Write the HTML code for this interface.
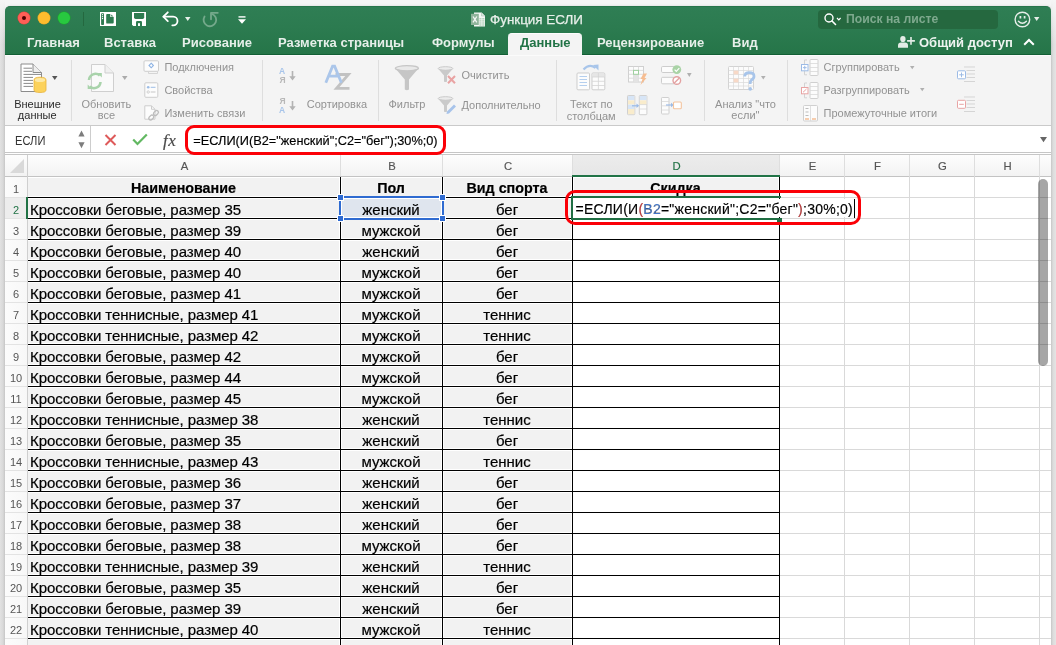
<!DOCTYPE html><html><head><meta charset="utf-8"><style>
*{margin:0;padding:0;box-sizing:border-box}
html,body{width:1056px;height:645px;overflow:hidden;background:#f5f5f5;font-family:"Liberation Sans",sans-serif;position:relative}
.a{position:absolute}
.t{position:absolute;white-space:nowrap;line-height:1}
.tab{position:absolute;font-weight:bold;font-size:13px;color:#e6efe9;line-height:1;white-space:nowrap}
.rl{position:absolute;font-size:11px;color:#2a2a2a;line-height:1;white-space:nowrap}
.rd{color:#929292}
.c{position:absolute;white-space:nowrap;line-height:1;font-size:15px;color:#000;letter-spacing:-.07px;-webkit-text-stroke:.2px #000}
.cb{letter-spacing:0}
.rn{position:absolute;white-space:nowrap;line-height:1;font-size:11px;color:#555;text-align:center;width:22px}
.ch{position:absolute;white-space:nowrap;line-height:1;font-size:11.3px;color:#555;text-align:center;-webkit-text-stroke:.15px #555}
svg{position:absolute;overflow:visible}
</style></head><body><div id="root" style="position:absolute;left:0;top:0;width:1056px;height:645px;overflow:hidden;will-change:transform">
<div class="a" style="left:4.5px;top:5.5px;width:1047px;height:660px;background:#d0d0d0;border-radius:5.5px 5.5px 0 0;box-shadow:0 0 3px rgba(0,0,0,.12)"></div>
<div class="a" style="left:5px;top:30px;width:1046px;height:630px;background:#fff"></div>
<div class="a" style="left:5px;top:6px;width:1046px;height:49px;background:linear-gradient(#2f7e54 0px,#2c7b50 20px,#257548 48px);border-radius:5px 5px 0 0;border-top:1px solid #26744a"></div>
<div class="a" style="left:5px;top:54px;width:1046px;height:1px;background:#135f35"></div>
<div class="a" style="left:18px;top:12px;width:12px;height:12px;border-radius:50%;background:#fe5f57;box-shadow:0 0 0 .5px #e0443e"></div>
<div class="a" style="left:38px;top:12px;width:12px;height:12px;border-radius:50%;background:#febc2e;box-shadow:0 0 0 .5px #dea123"></div>
<div class="a" style="left:58px;top:12px;width:12px;height:12px;border-radius:50%;background:#28c840;box-shadow:0 0 0 .5px #1aab29"></div>
<div class="a" style="left:22px;top:16px;width:4px;height:4px;border-radius:50%;background:#4d0000"></div>
<div class="a" style="left:83px;top:12px;width:1px;height:14px;background:#24683f"></div>
<svg style="left:100px;top:12px" width="16" height="14" viewBox="0 0 16 14"><rect x="0" y="0" width="16" height="14" fill="#fff"/><rect x="1.1" y="1.2" width="2.9" height="11.8" rx=".8" fill="#2d7b50"/><circle cx="2.55" cy="2.7" r=".65" fill="#fff"/><circle cx="2.55" cy="4.6" r=".65" fill="#fff"/><circle cx="2.55" cy="6.5" r=".65" fill="#fff"/><path d="M6.2 2.9 Q6.2 2 7.1 2 H10.3 V5 H13.7 V10.6 Q13.7 11.6 12.8 11.6 H7.1 Q6.2 11.6 6.2 10.7 Z" fill="#2d7b50"/><path d="M11.2 2.4 L13.5 4.6 H11.2 Z" fill="#2d7b50"/></svg>
<svg style="left:132px;top:12px" width="14" height="14" viewBox="0 0 14 14"><path d="M0 0 H14 V14 H1.2 L0 12.8 Z" fill="#fff"/><path d="M2 1.1 H12.2 V5.3 Q12.2 6.9 10.6 6.9 H3.6 Q2 6.9 2 5.3 Z" fill="#2d7b50"/><path d="M4 14 V10.2 Q4 9 5.2 9 H8.8 Q10 9 10 10.2 V14 Z" fill="#2d7b50"/><rect x="6" y="11.2" width="2" height="2.8" fill="#fff"/></svg>
<svg style="left:162px;top:11px" width="18" height="16" viewBox="0 0 18 16"><path d="M1.5 5.7 H11.2 A4.3 4.3 0 0 1 11.2 14.3 H10.3" fill="none" stroke="#fff" stroke-width="1.8" stroke-linecap="round"/><path d="M5.8 1.3 L1.4 5.7 L5.8 10.1" fill="none" stroke="#fff" stroke-width="1.8" stroke-linecap="round" stroke-linejoin="round"/></svg>
<svg style="left:185px;top:17px" width="6" height="4" viewBox="0 0 6 4"><path d="M0 0 H5.5 L2.75 4 Z" fill="#e8f0ea"/></svg>
<svg style="left:202px;top:11px" width="17" height="17" viewBox="0 0 17 17"><path d="M2.56 5.56 A6.3 6.3 0 1 0 10.05 2.98" fill="none" stroke="#74a98b" stroke-width="1.8" stroke-linecap="round"/><path d="M15.8 1.8 H9 V8.3" fill="none" stroke="#74a98b" stroke-width="1.8" stroke-linecap="round" stroke-linejoin="round"/></svg>
<svg style="left:238px;top:16px" width="8" height="8" viewBox="0 0 8 8"><rect x="0.5" y="0.2" width="7" height="1.4" fill="#fff"/><path d="M0 3.3 H8 L4 7.8 Z" fill="#fff"/></svg>
<svg style="left:471px;top:11.5px" width="15" height="15" viewBox="0 0 15 15"><path d="M3 0.5 H10.5 L14 4 V14.5 H3 Z" fill="#f4f7f5"/><path d="M10.5 0.5 V4 H14" fill="#e0e8e3" stroke="#9bb8a6" stroke-width=".5"/><g fill="#a9cdb3"><rect x="8.3" y="6.2" width="2.2" height="1.2"/><rect x="11.2" y="6.2" width="2.2" height="1.2"/><rect x="8.3" y="8.3" width="2.2" height="1.2"/><rect x="11.2" y="8.3" width="2.2" height="1.2"/><rect x="8.3" y="10.4" width="2.2" height="1.2"/><rect x="11.2" y="10.4" width="2.2" height="1.2"/><rect x="8.3" y="12.4" width="2.2" height="1.2"/><rect x="11.2" y="12.4" width="2.2" height="1.2"/></g><rect x="0" y="1.8" width="7.8" height="11.2" fill="#8fb49b"/><path d="M2 4.5 L5.8 10.3 M5.8 4.5 L2 10.3" stroke="#f4f7f5" stroke-width="1.3"/></svg>
<div class="t" style="left:490px;top:13px;font-size:13.4px;color:#e8f0ea;-webkit-text-stroke:.25px #e8f0ea">Функция ЕСЛИ</div>
<div class="a" style="left:818px;top:10px;width:180px;height:19px;background:#25683f;border-radius:4px"></div>
<svg style="left:824px;top:13px" width="18" height="13" viewBox="0 0 18 13"><circle cx="5" cy="5" r="4" fill="none" stroke="#fff" stroke-width="1.4"/><path d="M8 8 L11.5 11.5" stroke="#fff" stroke-width="1.6" stroke-linecap="round"/><path d="M13 5 L14.8 6.8 L16.6 5" fill="none" stroke="#fff" stroke-width="1.2"/></svg>
<div class="t" style="left:846px;top:13px;font-size:12.2px;font-weight:bold;color:#7ea98e">Поиск на листе</div>
<svg style="left:1013.5px;top:10.5px" width="17" height="17" viewBox="0 0 17 17"><circle cx="8.4" cy="8.5" r="7.3" fill="none" stroke="#e6eee9" stroke-width="1.4"/><path d="M6.4 5 V7.6 M10.6 5 V7.6" stroke="#e6eee9" stroke-width="1.7"/><path d="M4.4 10.3 Q8.4 14.2 12.4 10.3" fill="none" stroke="#e6eee9" stroke-width="1.4" stroke-linecap="round"/></svg>
<svg style="left:1034px;top:17px" width="6" height="5" viewBox="0 0 6 5"><path d="M0 0 H5.4 L2.7 4 Z" fill="#e6eee9"/></svg>
<div class="tab" style="left:27px;top:36px">Главная</div>
<div class="tab" style="left:104px;top:36px">Вставка</div>
<div class="tab" style="left:182px;top:36px">Рисование</div>
<div class="tab" style="left:278px;top:36px">Разметка страницы</div>
<div class="tab" style="left:432px;top:36px">Формулы</div>
<div class="tab" style="left:597px;top:36px">Рецензирование</div>
<div class="tab" style="left:732px;top:36px">Вид</div>
<div class="a" style="left:508px;top:33px;width:74px;height:23px;background:#f4f4f4;border-radius:4px 4px 0 0;border-top:1px solid #fdfdfd"></div>
<div class="tab" style="left:520px;top:36px;color:#217346">Данные</div>
<svg style="left:898px;top:35px" width="18" height="14" viewBox="0 0 18 14"><ellipse cx="4.9" cy="4" rx="2.7" ry="3.1" fill="#e3ece6"/><path d="M0 12.8 V10.5 Q0 7.6 3 7.6 H7 Q10 7.6 10 10.5 V12.8 Z" fill="#e3ece6"/><path d="M13 2 V9.8 M9.1 5.9 H16.9" stroke="#e3ece6" stroke-width="1.6"/></svg>
<div class="tab" style="left:919px;top:36px;color:#eef4f0;font-size:13px">Общий доступ</div>
<svg style="left:1023px;top:38px" width="12" height="8" viewBox="0 0 12 8"><path d="M1.2 6.8 L6 2 L10.8 6.8" fill="none" stroke="#fff" stroke-width="2"/></svg>
<div class="a" style="left:5px;top:55px;width:1046px;height:1px;background:#fbfbfb"></div>
<div class="a" style="left:5px;top:56px;width:1046px;height:69px;background:#f4f4f4"></div>
<div class="a" style="left:5px;top:125px;width:1046px;height:1px;background:#cacaca"></div>
<div class="a" style="left:71px;top:60px;width:1px;height:61px;background:#dedede"></div>
<div class="a" style="left:262px;top:60px;width:1px;height:61px;background:#dedede"></div>
<div class="a" style="left:378px;top:60px;width:1px;height:61px;background:#dedede"></div>
<div class="a" style="left:556px;top:60px;width:1px;height:61px;background:#dedede"></div>
<div class="a" style="left:704px;top:60px;width:1px;height:61px;background:#dedede"></div>
<div class="a" style="left:787px;top:60px;width:1px;height:61px;background:#dedede"></div>
<svg style="left:20px;top:63px" width="27" height="30" viewBox="0 0 27 30"><path d="M1 1 H13 L21.5 9.5 V28.5 H1 Z" fill="#fff" stroke="#8c8c8c" stroke-width="1" stroke-linejoin="round"/><path d="M13 1 V9.5 H21.5" fill="#eee" stroke="#8c8c8c" stroke-width="1"/><g stroke="#8a8a8a" stroke-width="1"><path d="M3.5 5.2 H12 M3.5 8.3 H12 M3.5 11.4 H21 M3.5 14.4 H13 M3.5 17.4 H13 M3.5 20.4 H13 M3.5 23.4 H13"/></g><path d="M14 17 Q14 14.2 20 14.2 Q26 14.2 26 17 V27 Q26 29.5 20 29.5 Q14 29.5 14 27 Z" fill="#fcd25b" stroke="#e8b43c" stroke-width=".8"/><ellipse cx="20" cy="17" rx="5.2" ry="2" fill="#fde9a6"/></svg>
<svg style="left:52px;top:76px" width="6" height="4" viewBox="0 0 6 4"><path d="M0 0 H5.5 L2.75 4 Z" fill="#555"/></svg>
<div class="rl" style="left:-22.5px;top:98.5px;width:120px;text-align:center">Внешние</div>
<div class="rl" style="left:-22.799999999999997px;top:110.4px;width:120px;text-align:center">данные</div>
<svg style="left:86px;top:63px" width="29" height="30" viewBox="0 0 29 30"><path d="M5.5 1.5 H19 L27.5 10 V28.5 H5.5 Z" fill="#fafafa" stroke="#cfcfcf" stroke-width="1"/><path d="M19 1.5 V10 H27.5" fill="#f0f0f0" stroke="#cfcfcf" stroke-width="1"/><path d="M3 17 A6.5 6.5 0 0 1 13.8 12.5" fill="none" stroke="#a9d3ab" stroke-width="2.6"/><path d="M11.5 10 L15.8 10 L15.8 14.5 Z" fill="#a9d3ab"/><path d="M14.5 19 A6.5 6.5 0 0 1 3.7 23.5" fill="none" stroke="#a9d3ab" stroke-width="2.6"/><path d="M6 26 L1.7 26 L1.7 21.5 Z" fill="#a9d3ab"/></svg>
<svg style="left:122px;top:76px" width="6" height="4" viewBox="0 0 6 4"><path d="M0 0 H5.5 L2.75 4 Z" fill="#ababab"/></svg>
<div class="rl rd" style="left:46.400000000000006px;top:99.0px;width:120px;text-align:center">Обновить</div>
<div class="rl rd" style="left:46.400000000000006px;top:110.4px;width:120px;text-align:center">все</div>
<svg style="left:143px;top:60px" width="17" height="15" viewBox="0 0 17 15"><rect x="1" y="0.8" width="14.5" height="10.5" rx="1" fill="#fcfcfc" stroke="#cdcdcd"/><path d="M5.5 11.3 V13.5 H14.5 V11.3" fill="none" stroke="#d5d5d5"/><path d="M8.2 3.2 L10.4 5.5 L8.2 7.8 L6 5.5 Z" fill="none" stroke="#8fb4e4" stroke-width="1.1"/></svg>
<svg style="left:144px;top:82px" width="15" height="16" viewBox="0 0 15 16"><rect x="0.8" y="0.8" width="13" height="14.5" rx="1" fill="#fcfcfc" stroke="#cdcdcd"/><circle cx="4.2" cy="5.3" r="1.3" fill="#9dbde6"/><path d="M6.7 5.3 H11.5" stroke="#9dbde6" stroke-width="1"/><circle cx="4.2" cy="10" r="1.2" fill="none" stroke="#c6c6c6" stroke-width=".8"/><path d="M6.7 10 H11.5" stroke="#c6c6c6" stroke-width="1"/></svg>
<svg style="left:144px;top:105px" width="17" height="17" viewBox="0 0 17 17"><path d="M0.8 0.8 H7.5 L11 4.3 V14.2 H0.8 Z" fill="#fcfcfc" stroke="#cdcdcd"/><path d="M7.5 0.8 V4.3 H11" fill="none" stroke="#cdcdcd"/><g fill="none" stroke="#bdbdbd" stroke-width="1.3"><rect x="4.5" y="10.8" width="5.5" height="3.6" rx="1.8" transform="rotate(-45 7.25 12.6)"/><rect x="9.2" y="6.2" width="5.5" height="3.6" rx="1.8" transform="rotate(-45 11.95 8)"/></g></svg>
<div class="rl rd" style="left:164.4px;top:62.0px">Подключения</div>
<div class="rl rd" style="left:164.4px;top:84.8px">Свойства</div>
<div class="rl rd" style="left:164.4px;top:107.5px">Изменить связи</div>
<div class="t" style="left:279px;top:66.5px;font-size:8.5px;color:#a8c5ea;font-weight:bold">А</div>
<div class="t" style="left:279.5px;top:75.5px;font-size:8.5px;color:#b8b8b8;font-weight:bold">Я</div>
<div class="t" style="left:279.5px;top:96.5px;font-size:8.5px;color:#b8b8b8;font-weight:bold">Я</div>
<div class="t" style="left:279px;top:105.5px;font-size:8.5px;color:#a8c5ea;font-weight:bold">А</div>
<svg style="left:288.5px;top:71px" width="7" height="10" viewBox="0 0 7 10"><path d="M3.5 0 V8" stroke="#b3b3b3" stroke-width="1.6"/><path d="M0.3 5.2 L3.5 9.4 L6.7 5.2 Z" fill="#b3b3b3"/></svg>
<svg style="left:288.5px;top:100.5px" width="7" height="10" viewBox="0 0 7 10"><path d="M3.5 0 V8" stroke="#b3b3b3" stroke-width="1.6"/><path d="M0.3 5.2 L3.5 9.4 L6.7 5.2 Z" fill="#b3b3b3"/></svg>
<svg style="left:324px;top:65px" width="27" height="26" viewBox="0 0 27 26"><path d="M11.5 9.5 H24.5 L12.5 23.3 H25.5" fill="none" stroke="#c2c2c2" stroke-width="2.8"/><path d="M1.8 17.8 L8.6 1.2 H10.6 L17.4 17.8 M4.8 11.2 H14.4" fill="none" stroke="#abc6ea" stroke-width="2.8"/></svg>
<div class="rl rd" style="left:306.7px;top:98.6px">Сортировка</div>
<svg style="left:394px;top:65px" width="26" height="27" viewBox="0 0 26 27"><ellipse cx="12.9" cy="3.3" rx="11.6" ry="2.6" fill="#e9e9e9" stroke="#c6c6c6" stroke-width="1.2"/><path d="M1.4 3.6 L10.8 14.5 V24.5 Q12.9 26 15 24.5 V14.5 L24.4 3.6 Q12.9 8 1.4 3.6 Z" fill="#c6c6c6"/></svg>
<div class="rl rd" style="left:388.5px;top:99.0px">Фильтр</div>
<svg style="left:437px;top:66px" width="20" height="19" viewBox="0 0 20 19"><ellipse cx="8.5" cy="2.5" rx="7.3" ry="1.8" fill="#ececec" stroke="#cacaca" stroke-width="1"/><path d="M1.2 2.7 L7 9.5 V15.5 Q8.5 16.5 10 15.5 V9.5 L15.8 2.7 Q8.5 5.5 1.2 2.7 Z" fill="#cacaca"/><path d="M11 10 L18 17.3 M18 10 L11 17.3" stroke="#e9a3a3" stroke-width="2"/></svg>
<div class="rl rd" style="left:461.5px;top:70.0px">Очистить</div>
<svg style="left:437px;top:96px" width="20" height="19" viewBox="0 0 20 19"><ellipse cx="8.5" cy="2.5" rx="7.3" ry="1.8" fill="#ececec" stroke="#cacaca" stroke-width="1"/><path d="M1.2 2.7 L7 9.5 V15.5 Q8.5 16.5 10 15.5 V9.5 L15.8 2.7 Q8.5 5.5 1.2 2.7 Z" fill="#cacaca"/><path d="M17 8.5 L19 10.5 L12 17.5 L9.5 18 L10 15.5 Z" fill="#a7c3ea"/></svg>
<div class="rl rd" style="left:461.5px;top:99.8px">Дополнительно</div>
<svg style="left:576px;top:64px" width="30" height="27" viewBox="0 0 30 27"><path d="M7.5 5.5 Q13.5 -1 19.5 4" fill="none" stroke="#a8c5ea" stroke-width="2.2"/><path d="M17 1 L22.5 6.5 L22.5 0.5 Z" fill="#a8c5ea"/><rect x="1" y="9" width="12.5" height="16.8" rx="1" fill="#fcfcfc" stroke="#cdcdcd"/><g stroke="#b5cfee" stroke-width="1"><path d="M3.5 12.5 H11 M3.5 15.5 H11 M3.5 18.5 H11 M3.5 21.5 H11"/></g><rect x="16" y="9" width="12.8" height="16.8" rx="1" fill="#fcfcfc" stroke="#cdcdcd"/><rect x="16.5" y="9.5" width="11.8" height="3.5" fill="#e6e6e6"/><path d="M22.4 9 V25.8 M16 13 H28.8 M16 17.3 H28.8 M16 21.5 H28.8" stroke="#d4d4d4" stroke-width=".8"/></svg>
<div class="rl rd" style="left:531.3px;top:98.7px;width:120px;text-align:center">Текст по</div>
<div class="rl rd" style="left:531.2px;top:110.5px;width:120px;text-align:center">столбцам</div>
<svg style="left:628px;top:66px" width="20" height="20" viewBox="0 0 20 20"><rect x="0.5" y="0.5" width="15" height="15.5" fill="#fcfcfc" stroke="#d0d0d0"/><path d="M5.5 0.5 V16 M10.5 0.5 V16 M0.5 4.4 H15.5 M0.5 8.3 H15.5 M0.5 12.2 H15.5" stroke="#d5d5d5" stroke-width=".8"/><rect x="5.5" y="8.3" width="5" height="7.7" fill="#e3e3e3"/><rect x="5.5" y="4.4" width="5" height="3.9" fill="#fff" stroke="#9fd09f" stroke-width="1"/><path d="M15.5 7.5 H19 L16.5 12 H18.5 L12.5 19 L14.5 13 H12.5 Z" fill="#f6bd92"/></svg>
<svg style="left:661px;top:65px" width="22" height="21" viewBox="0 0 22 21"><rect x="0.5" y="1.5" width="13" height="6" rx="1.2" fill="#fcfcfc" stroke="#cdcdcd"/><rect x="0.5" y="12.3" width="13" height="6.5" rx="1.2" fill="#fcfcfc" stroke="#cdcdcd"/><circle cx="15.8" cy="4.6" r="4.4" fill="#a9d3a6"/><path d="M13.6 4.6 L15.3 6.3 L18.3 3.1" fill="none" stroke="#fff" stroke-width="1.2"/><circle cx="15.8" cy="15.5" r="3.8" fill="#fff" stroke="#e3a2a2" stroke-width="1.4"/><path d="M13.3 18 L18.3 13" stroke="#e3a2a2" stroke-width="1.4"/></svg>
<svg style="left:687px;top:73px" width="5" height="4" viewBox="0 0 5 4"><path d="M0 0 H4.6 L2.3 4 Z" fill="#b0b0b0"/></svg>
<svg style="left:627px;top:95px" width="21" height="21" viewBox="0 0 21 21"><rect x="0.5" y="0.5" width="7.3" height="19.2" rx=".8" fill="#fcfcfc" stroke="#d0d0d0"/><rect x="1" y="1" width="6.3" height="4.3" fill="#d7e5f6"/><rect x="1" y="5.3" width="6.3" height="4.3" fill="#f9eccc"/><rect x="1" y="9.6" width="6.3" height="4.4" fill="#d7e5f6"/><rect x="1" y="14" width="6.3" height="5.2" fill="#f9eccc"/><rect x="12.3" y="0.5" width="7.6" height="19.2" rx=".8" fill="#fcfcfc" stroke="#d0d0d0"/><rect x="12.8" y="1" width="6.6" height="4.3" fill="#d7e5f6"/><rect x="12.8" y="5.3" width="6.6" height="4.3" fill="#f9eccc"/><path d="M12.3 9.6 H19.9 M12.3 14 H19.9" stroke="#d5d5d5" stroke-width=".8"/><path d="M5 10.8 H11" stroke="#9cbbe6" stroke-width="1.2"/><path d="M9.5 8.6 L12.2 10.8 L9.5 13" fill="#9cbbe6"/></svg>
<svg style="left:661px;top:97px" width="21" height="18" viewBox="0 0 21 18"><rect x="0.5" y="0.5" width="7.5" height="16.5" rx=".8" fill="#fcfcfc" stroke="#d0d0d0"/><path d="M0.5 4.5 H8 M0.5 8.8 H8 M0.5 13 H8" stroke="#d8d8d8" stroke-width=".8"/><path d="M5 8 H11" stroke="#9cbbe6" stroke-width="1.2"/><path d="M10 5.8 L12.8 8 L10 10.2 Z" fill="#9cbbe6"/><rect x="12.5" y="5" width="7.8" height="6.8" rx="1" fill="#fff" stroke="#f3c49e" stroke-width="1.1"/></svg>
<svg style="left:728px;top:66px" width="28" height="26" viewBox="0 0 28 26"><rect x="0.5" y="0.5" width="25" height="23" rx="1" fill="#fcfcfc" stroke="#d3d3d3"/><path d="M5.5 0.5 V23.5 M10.5 0.5 V23.5 M15.5 0.5 V23.5 M20.5 0.5 V23.5 M0.5 4.5 H25.5 M0.5 8.5 H25.5 M0.5 12.5 H25.5 M0.5 16.5 H25.5 M0.5 20 H25.5" stroke="#dadada" stroke-width=".7"/><rect x="5.6" y="4.6" width="4.8" height="3.8" fill="#f8d9c7"/><rect x="5.6" y="12.6" width="4.8" height="3.8" fill="#f8d9c7"/><path d="M16.7 10.5 Q16.7 6.6 21.5 6.6 Q26 6.6 26 10.3 Q26 12.6 23.5 14 Q22.2 14.8 22.2 17 V18" fill="none" stroke="#a8c5ea" stroke-width="2.8"/><circle cx="22.2" cy="22.9" r="1.8" fill="#a8c5ea"/></svg>
<svg style="left:760.5px;top:76px" width="5" height="4" viewBox="0 0 5 4"><path d="M0 0 H4.6 L2.3 3.4 Z" fill="#b0b0b0"/></svg>
<div class="rl rd" style="left:685.5px;top:98.7px;width:120px;text-align:center">Анализ "что</div>
<div class="rl rd" style="left:685.4px;top:110.1px;width:120px;text-align:center">если"</div>
<svg style="left:800px;top:59px" width="19" height="17" viewBox="0 0 19 17"><path d="M7 1 H4.5 V15.8 H7" fill="none" stroke="#d3d3d3"/><rect x="10" y="0.5" width="8" height="16" rx=".8" fill="#fcfcfc" stroke="#d0d0d0"/><path d="M10 4.5 H18 M10 8.5 H18 M10 12.5 H18" stroke="#d8d8d8" stroke-width=".8"/><rect x="1.5" y="5.5" width="6.5" height="6.3" fill="#fff" stroke="#9cbbe6" stroke-width="1"/><path d="M4.75 6.8 V10.5 M2.9 8.65 H6.6" stroke="#9cbbe6" stroke-width="1"/></svg>
<svg style="left:800px;top:82px" width="19" height="17" viewBox="0 0 19 17"><path d="M7 1 H4.5 V15.8 H7" fill="none" stroke="#d3d3d3"/><rect x="10" y="0.5" width="8" height="16" rx=".8" fill="#fcfcfc" stroke="#d0d0d0"/><path d="M10 4.5 H18 M10 8.5 H18 M10 12.5 H18" stroke="#d8d8d8" stroke-width=".8"/><rect x="1.5" y="5.5" width="6.5" height="6.3" fill="#fff" stroke="#e8a3a3" stroke-width="1"/><path d="M3 10.3 L6.5 7" stroke="#e8a3a3" stroke-width="1"/></svg>
<svg style="left:803px;top:105px" width="16" height="17" viewBox="0 0 16 17"><rect x="0.5" y="0.5" width="14" height="15.5" rx="1" fill="#fcfcfc" stroke="#d0d0d0"/><path d="M7.5 0.5 V16" stroke="#d8d8d8" stroke-width=".8"/><path d="M2.5 3.5 H5.5 M2.5 7 H5.5 M2.5 10.5 H5.5" stroke="#bdbdbd" stroke-width="1"/><path d="M2 14 H6 M9 14 H13" stroke="#f5bf95" stroke-width="1.4"/></svg>
<div class="rl rd" style="left:823.5px;top:62.0px">Сгруппировать</div>
<div class="rl rd" style="left:823.5px;top:84.8px">Разгруппировать</div>
<div class="rl rd" style="left:823.5px;top:107.5px">Промежуточные итоги</div>
<svg style="left:909.5px;top:65.5px" width="5" height="4" viewBox="0 0 5 4"><path d="M0 0 H4.5 L2.25 3.2 Z" fill="#b0b0b0"/></svg>
<svg style="left:920.3px;top:88.3px" width="5" height="4" viewBox="0 0 5 4"><path d="M0 0 H4.5 L2.25 3.2 Z" fill="#b0b0b0"/></svg>
<svg style="left:957px;top:66px" width="19" height="18" viewBox="0 0 19 18"><path d="M7 1 H18 M9.5 4.5 H18 M9.5 8 H18 M9.5 11.5 H18 M7 15.5 H18" stroke="#d5d5d5" stroke-width="1"/><rect x="0.5" y="4.8" width="8" height="8" rx="1" fill="#fff" stroke="#9cbbe6" stroke-width="1"/><path d="M4.5 6.5 V11.2 M2.2 8.8 H6.8" stroke="#9cbbe6" stroke-width="1"/></svg>
<svg style="left:957px;top:96px" width="19" height="18" viewBox="0 0 19 18"><path d="M7 1 H18 M9.5 4.5 H18 M9.5 8 H18 M9.5 11.5 H18 M7 15.5 H18" stroke="#d5d5d5" stroke-width="1"/><rect x="0.5" y="4.3" width="8" height="8" rx="1" fill="#fff" stroke="#e8a3a3" stroke-width="1"/><path d="M2.2 8.3 H6.8" stroke="#e8a3a3" stroke-width="1"/></svg>
<div class="a" style="left:5px;top:126px;width:1046px;height:26px;background:#fff"></div>
<div class="a" style="left:5px;top:152px;width:1046px;height:1px;background:#c6c6c6"></div>
<div class="a" style="left:5px;top:153px;width:1046px;height:1px;background:#fff"></div>
<div class="a" style="left:5px;top:154px;width:1046px;height:1px;background:#c6c6c6"></div>
<div class="a" style="left:90px;top:126px;width:1px;height:26px;background:#cdcdcd"></div>
<div class="t" style="left:15.2px;top:134.5px;font-size:12.5px;color:#333;transform:scaleX(.89);transform-origin:0 0">ЕСЛИ</div>
<svg style="left:78px;top:130px" width="7" height="19" viewBox="0 0 7 19"><path d="M0.4 6.6 L3.5 0.4 L6.6 6.6 Z" fill="#7d7d7d"/><path d="M0.4 12.3 L3.5 18.3 L6.6 12.3 Z" fill="#7d7d7d"/></svg>
<svg style="left:104px;top:134px" width="13" height="12" viewBox="0 0 13 12"><path d="M1.5 1 L11.5 11 M11.5 1 L1.5 11" stroke="#de5a5a" stroke-width="2"/></svg>
<svg style="left:132px;top:133px" width="16" height="13" viewBox="0 0 16 13"><path d="M1.2 6.5 L5.5 11 L14.8 1.5" fill="none" stroke="#62b862" stroke-width="2.2"/></svg>
<div class="t" style="left:163px;top:132px;font-family:&quot;Liberation Serif&quot;,serif;font-style:italic;font-size:17px;color:#4a4a4a;letter-spacing:.6px;-webkit-text-stroke:.2px #4a4a4a">fx</div>
<div class="t" style="left:193.3px;top:134.5px;font-size:12.75px;color:#000;-webkit-text-stroke:.15px #000">=ЕСЛИ(И(B2="женский";C2="бег");30%;0)</div>
<svg style="left:1040px;top:137px" width="7" height="6" viewBox="0 0 7 6"><path d="M0 0 H7 L3.5 5.2 Z" fill="#666"/></svg>
<div class="a" style="left:5px;top:155px;width:1046px;height:21px;background:linear-gradient(#fdfdfd,#f3f3f3)"></div>
<div class="a" style="left:5px;top:176px;width:1046px;height:1px;background:#c3c3c3"></div>
<div class="a" style="left:5px;top:177px;width:22px;height:500px;background:linear-gradient(90deg,#fcfcfc,#f7f7f7)"></div>
<div class="a" style="left:27px;top:155px;width:1px;height:500px;background:#cfcfcf"></div>
<div class="a" style="left:28px;top:178px;width:311px;height:18px;background:#f2f2f2"></div>
<div class="a" style="left:342px;top:178px;width:99px;height:18px;background:#f2f2f2"></div>
<div class="a" style="left:444px;top:178px;width:127px;height:18px;background:#f2f2f2"></div>
<div class="a" style="left:28px;top:199px;width:311px;height:18px;background:#f2f2f2"></div>
<div class="a" style="left:342px;top:199px;width:99px;height:18px;background:#f2f2f2"></div>
<div class="a" style="left:444px;top:199px;width:127px;height:18px;background:#f2f2f2"></div>
<div class="a" style="left:28px;top:220px;width:311px;height:18px;background:#f2f2f2"></div>
<div class="a" style="left:342px;top:220px;width:99px;height:18px;background:#f2f2f2"></div>
<div class="a" style="left:444px;top:220px;width:127px;height:18px;background:#f2f2f2"></div>
<div class="a" style="left:28px;top:241px;width:311px;height:18px;background:#f2f2f2"></div>
<div class="a" style="left:342px;top:241px;width:99px;height:18px;background:#f2f2f2"></div>
<div class="a" style="left:444px;top:241px;width:127px;height:18px;background:#f2f2f2"></div>
<div class="a" style="left:28px;top:262px;width:311px;height:18px;background:#f2f2f2"></div>
<div class="a" style="left:342px;top:262px;width:99px;height:18px;background:#f2f2f2"></div>
<div class="a" style="left:444px;top:262px;width:127px;height:18px;background:#f2f2f2"></div>
<div class="a" style="left:28px;top:283px;width:311px;height:18px;background:#f2f2f2"></div>
<div class="a" style="left:342px;top:283px;width:99px;height:18px;background:#f2f2f2"></div>
<div class="a" style="left:444px;top:283px;width:127px;height:18px;background:#f2f2f2"></div>
<div class="a" style="left:28px;top:304px;width:311px;height:18px;background:#f2f2f2"></div>
<div class="a" style="left:342px;top:304px;width:99px;height:18px;background:#f2f2f2"></div>
<div class="a" style="left:444px;top:304px;width:127px;height:18px;background:#f2f2f2"></div>
<div class="a" style="left:28px;top:325px;width:311px;height:18px;background:#f2f2f2"></div>
<div class="a" style="left:342px;top:325px;width:99px;height:18px;background:#f2f2f2"></div>
<div class="a" style="left:444px;top:325px;width:127px;height:18px;background:#f2f2f2"></div>
<div class="a" style="left:28px;top:346px;width:311px;height:18px;background:#f2f2f2"></div>
<div class="a" style="left:342px;top:346px;width:99px;height:18px;background:#f2f2f2"></div>
<div class="a" style="left:444px;top:346px;width:127px;height:18px;background:#f2f2f2"></div>
<div class="a" style="left:28px;top:367px;width:311px;height:18px;background:#f2f2f2"></div>
<div class="a" style="left:342px;top:367px;width:99px;height:18px;background:#f2f2f2"></div>
<div class="a" style="left:444px;top:367px;width:127px;height:18px;background:#f2f2f2"></div>
<div class="a" style="left:28px;top:388px;width:311px;height:18px;background:#f2f2f2"></div>
<div class="a" style="left:342px;top:388px;width:99px;height:18px;background:#f2f2f2"></div>
<div class="a" style="left:444px;top:388px;width:127px;height:18px;background:#f2f2f2"></div>
<div class="a" style="left:28px;top:409px;width:311px;height:18px;background:#f2f2f2"></div>
<div class="a" style="left:342px;top:409px;width:99px;height:18px;background:#f2f2f2"></div>
<div class="a" style="left:444px;top:409px;width:127px;height:18px;background:#f2f2f2"></div>
<div class="a" style="left:28px;top:430px;width:311px;height:18px;background:#f2f2f2"></div>
<div class="a" style="left:342px;top:430px;width:99px;height:18px;background:#f2f2f2"></div>
<div class="a" style="left:444px;top:430px;width:127px;height:18px;background:#f2f2f2"></div>
<div class="a" style="left:28px;top:451px;width:311px;height:18px;background:#f2f2f2"></div>
<div class="a" style="left:342px;top:451px;width:99px;height:18px;background:#f2f2f2"></div>
<div class="a" style="left:444px;top:451px;width:127px;height:18px;background:#f2f2f2"></div>
<div class="a" style="left:28px;top:472px;width:311px;height:18px;background:#f2f2f2"></div>
<div class="a" style="left:342px;top:472px;width:99px;height:18px;background:#f2f2f2"></div>
<div class="a" style="left:444px;top:472px;width:127px;height:18px;background:#f2f2f2"></div>
<div class="a" style="left:28px;top:493px;width:311px;height:18px;background:#f2f2f2"></div>
<div class="a" style="left:342px;top:493px;width:99px;height:18px;background:#f2f2f2"></div>
<div class="a" style="left:444px;top:493px;width:127px;height:18px;background:#f2f2f2"></div>
<div class="a" style="left:28px;top:514px;width:311px;height:18px;background:#f2f2f2"></div>
<div class="a" style="left:342px;top:514px;width:99px;height:18px;background:#f2f2f2"></div>
<div class="a" style="left:444px;top:514px;width:127px;height:18px;background:#f2f2f2"></div>
<div class="a" style="left:28px;top:535px;width:311px;height:18px;background:#f2f2f2"></div>
<div class="a" style="left:342px;top:535px;width:99px;height:18px;background:#f2f2f2"></div>
<div class="a" style="left:444px;top:535px;width:127px;height:18px;background:#f2f2f2"></div>
<div class="a" style="left:28px;top:556px;width:311px;height:18px;background:#f2f2f2"></div>
<div class="a" style="left:342px;top:556px;width:99px;height:18px;background:#f2f2f2"></div>
<div class="a" style="left:444px;top:556px;width:127px;height:18px;background:#f2f2f2"></div>
<div class="a" style="left:28px;top:577px;width:311px;height:18px;background:#f2f2f2"></div>
<div class="a" style="left:342px;top:577px;width:99px;height:18px;background:#f2f2f2"></div>
<div class="a" style="left:444px;top:577px;width:127px;height:18px;background:#f2f2f2"></div>
<div class="a" style="left:28px;top:598px;width:311px;height:18px;background:#f2f2f2"></div>
<div class="a" style="left:342px;top:598px;width:99px;height:18px;background:#f2f2f2"></div>
<div class="a" style="left:444px;top:598px;width:127px;height:18px;background:#f2f2f2"></div>
<div class="a" style="left:28px;top:619px;width:311px;height:18px;background:#f2f2f2"></div>
<div class="a" style="left:342px;top:619px;width:99px;height:18px;background:#f2f2f2"></div>
<div class="a" style="left:444px;top:619px;width:127px;height:18px;background:#f2f2f2"></div>
<div class="a" style="left:28px;top:640px;width:311px;height:18px;background:#f2f2f2"></div>
<div class="a" style="left:342px;top:640px;width:99px;height:18px;background:#f2f2f2"></div>
<div class="a" style="left:444px;top:640px;width:127px;height:18px;background:#f2f2f2"></div>
<div class="a" style="left:574px;top:178px;width:204px;height:18px;background:#f2f2f2"></div>
<div class="a" style="left:779px;top:197px;width:272px;height:1px;background:#d9d9d9"></div>
<div class="a" style="left:779px;top:218px;width:272px;height:1px;background:#d9d9d9"></div>
<div class="a" style="left:779px;top:239px;width:272px;height:1px;background:#d9d9d9"></div>
<div class="a" style="left:779px;top:260px;width:272px;height:1px;background:#d9d9d9"></div>
<div class="a" style="left:779px;top:281px;width:272px;height:1px;background:#d9d9d9"></div>
<div class="a" style="left:779px;top:302px;width:272px;height:1px;background:#d9d9d9"></div>
<div class="a" style="left:779px;top:323px;width:272px;height:1px;background:#d9d9d9"></div>
<div class="a" style="left:779px;top:344px;width:272px;height:1px;background:#d9d9d9"></div>
<div class="a" style="left:779px;top:365px;width:272px;height:1px;background:#d9d9d9"></div>
<div class="a" style="left:779px;top:386px;width:272px;height:1px;background:#d9d9d9"></div>
<div class="a" style="left:779px;top:407px;width:272px;height:1px;background:#d9d9d9"></div>
<div class="a" style="left:779px;top:428px;width:272px;height:1px;background:#d9d9d9"></div>
<div class="a" style="left:779px;top:449px;width:272px;height:1px;background:#d9d9d9"></div>
<div class="a" style="left:779px;top:470px;width:272px;height:1px;background:#d9d9d9"></div>
<div class="a" style="left:779px;top:491px;width:272px;height:1px;background:#d9d9d9"></div>
<div class="a" style="left:779px;top:512px;width:272px;height:1px;background:#d9d9d9"></div>
<div class="a" style="left:779px;top:533px;width:272px;height:1px;background:#d9d9d9"></div>
<div class="a" style="left:779px;top:554px;width:272px;height:1px;background:#d9d9d9"></div>
<div class="a" style="left:779px;top:575px;width:272px;height:1px;background:#d9d9d9"></div>
<div class="a" style="left:779px;top:596px;width:272px;height:1px;background:#d9d9d9"></div>
<div class="a" style="left:779px;top:617px;width:272px;height:1px;background:#d9d9d9"></div>
<div class="a" style="left:779px;top:638px;width:272px;height:1px;background:#d9d9d9"></div>
<div class="a" style="left:779px;top:659px;width:272px;height:1px;background:#d9d9d9"></div>
<div class="a" style="left:844px;top:176px;width:1px;height:500px;background:#d9d9d9"></div>
<div class="a" style="left:909px;top:176px;width:1px;height:500px;background:#d9d9d9"></div>
<div class="a" style="left:974px;top:176px;width:1px;height:500px;background:#d9d9d9"></div>
<div class="a" style="left:1039px;top:176px;width:1px;height:500px;background:#d9d9d9"></div>
<div class="a" style="left:5px;top:197px;width:22px;height:1px;background:#e3e3e3"></div>
<div class="a" style="left:5px;top:218px;width:22px;height:1px;background:#e3e3e3"></div>
<div class="a" style="left:5px;top:239px;width:22px;height:1px;background:#e3e3e3"></div>
<div class="a" style="left:5px;top:260px;width:22px;height:1px;background:#e3e3e3"></div>
<div class="a" style="left:5px;top:281px;width:22px;height:1px;background:#e3e3e3"></div>
<div class="a" style="left:5px;top:302px;width:22px;height:1px;background:#e3e3e3"></div>
<div class="a" style="left:5px;top:323px;width:22px;height:1px;background:#e3e3e3"></div>
<div class="a" style="left:5px;top:344px;width:22px;height:1px;background:#e3e3e3"></div>
<div class="a" style="left:5px;top:365px;width:22px;height:1px;background:#e3e3e3"></div>
<div class="a" style="left:5px;top:386px;width:22px;height:1px;background:#e3e3e3"></div>
<div class="a" style="left:5px;top:407px;width:22px;height:1px;background:#e3e3e3"></div>
<div class="a" style="left:5px;top:428px;width:22px;height:1px;background:#e3e3e3"></div>
<div class="a" style="left:5px;top:449px;width:22px;height:1px;background:#e3e3e3"></div>
<div class="a" style="left:5px;top:470px;width:22px;height:1px;background:#e3e3e3"></div>
<div class="a" style="left:5px;top:491px;width:22px;height:1px;background:#e3e3e3"></div>
<div class="a" style="left:5px;top:512px;width:22px;height:1px;background:#e3e3e3"></div>
<div class="a" style="left:5px;top:533px;width:22px;height:1px;background:#e3e3e3"></div>
<div class="a" style="left:5px;top:554px;width:22px;height:1px;background:#e3e3e3"></div>
<div class="a" style="left:5px;top:575px;width:22px;height:1px;background:#e3e3e3"></div>
<div class="a" style="left:5px;top:596px;width:22px;height:1px;background:#e3e3e3"></div>
<div class="a" style="left:5px;top:617px;width:22px;height:1px;background:#e3e3e3"></div>
<div class="a" style="left:5px;top:638px;width:22px;height:1px;background:#e3e3e3"></div>
<div class="a" style="left:5px;top:659px;width:22px;height:1px;background:#e3e3e3"></div>
<div class="a" style="left:28px;top:197px;width:752px;height:1px;background:#000"></div>
<div class="a" style="left:28px;top:218px;width:752px;height:1px;background:#000"></div>
<div class="a" style="left:28px;top:239px;width:752px;height:1px;background:#000"></div>
<div class="a" style="left:28px;top:260px;width:752px;height:1px;background:#000"></div>
<div class="a" style="left:28px;top:281px;width:752px;height:1px;background:#000"></div>
<div class="a" style="left:28px;top:302px;width:752px;height:1px;background:#000"></div>
<div class="a" style="left:28px;top:323px;width:752px;height:1px;background:#000"></div>
<div class="a" style="left:28px;top:344px;width:752px;height:1px;background:#000"></div>
<div class="a" style="left:28px;top:365px;width:752px;height:1px;background:#000"></div>
<div class="a" style="left:28px;top:386px;width:752px;height:1px;background:#000"></div>
<div class="a" style="left:28px;top:407px;width:752px;height:1px;background:#000"></div>
<div class="a" style="left:28px;top:428px;width:752px;height:1px;background:#000"></div>
<div class="a" style="left:28px;top:449px;width:752px;height:1px;background:#000"></div>
<div class="a" style="left:28px;top:470px;width:752px;height:1px;background:#000"></div>
<div class="a" style="left:28px;top:491px;width:752px;height:1px;background:#000"></div>
<div class="a" style="left:28px;top:512px;width:752px;height:1px;background:#000"></div>
<div class="a" style="left:28px;top:533px;width:752px;height:1px;background:#000"></div>
<div class="a" style="left:28px;top:554px;width:752px;height:1px;background:#000"></div>
<div class="a" style="left:28px;top:575px;width:752px;height:1px;background:#000"></div>
<div class="a" style="left:28px;top:596px;width:752px;height:1px;background:#000"></div>
<div class="a" style="left:28px;top:617px;width:752px;height:1px;background:#000"></div>
<div class="a" style="left:28px;top:638px;width:752px;height:1px;background:#000"></div>
<div class="a" style="left:28px;top:659px;width:752px;height:1px;background:#000"></div>
<div class="a" style="left:340px;top:177px;width:1px;height:500px;background:#000"></div>
<div class="a" style="left:442px;top:177px;width:1px;height:500px;background:#000"></div>
<div class="a" style="left:572px;top:177px;width:1px;height:500px;background:#000"></div>
<div class="a" style="left:779px;top:177px;width:1px;height:500px;background:#000"></div>
<div class="c" style="left:27px;top:181px;width:313px;text-align:center;font-weight:bold;font-size:14.3px;letter-spacing:0;-webkit-text-stroke:.2px #000">Наименование</div>
<div class="c" style="left:340px;top:181px;width:102px;text-align:center;font-weight:bold;font-size:14.3px;letter-spacing:0;-webkit-text-stroke:.2px #000">Пол</div>
<div class="c" style="left:442px;top:181px;width:130px;text-align:center;font-weight:bold;font-size:14.3px;letter-spacing:0;-webkit-text-stroke:.2px #000">Вид спорта</div>
<div class="c" style="left:572px;top:181px;width:207px;text-align:center;font-weight:bold;font-size:14.3px;letter-spacing:0;-webkit-text-stroke:.2px #000">Скидка</div>
<div class="c" style="left:30px;top:202px">Кроссовки беговые, размер 35</div>
<div class="c cb" style="left:340px;top:202px;width:102px;text-align:center">женский</div>
<div class="c cb" style="left:442px;top:202px;width:130px;text-align:center">бег</div>
<div class="c" style="left:30px;top:223px">Кроссовки беговые, размер 39</div>
<div class="c cb" style="left:340px;top:223px;width:102px;text-align:center">мужской</div>
<div class="c cb" style="left:442px;top:223px;width:130px;text-align:center">бег</div>
<div class="c" style="left:30px;top:244px">Кроссовки беговые, размер 40</div>
<div class="c cb" style="left:340px;top:244px;width:102px;text-align:center">женский</div>
<div class="c cb" style="left:442px;top:244px;width:130px;text-align:center">бег</div>
<div class="c" style="left:30px;top:265px">Кроссовки беговые, размер 40</div>
<div class="c cb" style="left:340px;top:265px;width:102px;text-align:center">мужской</div>
<div class="c cb" style="left:442px;top:265px;width:130px;text-align:center">бег</div>
<div class="c" style="left:30px;top:286px">Кроссовки беговые, размер 41</div>
<div class="c cb" style="left:340px;top:286px;width:102px;text-align:center">мужской</div>
<div class="c cb" style="left:442px;top:286px;width:130px;text-align:center">бег</div>
<div class="c" style="left:30px;top:307px">Кроссовки теннисные, размер 41</div>
<div class="c cb" style="left:340px;top:307px;width:102px;text-align:center">мужской</div>
<div class="c cb" style="left:442px;top:307px;width:130px;text-align:center">теннис</div>
<div class="c" style="left:30px;top:328px">Кроссовки теннисные, размер 42</div>
<div class="c cb" style="left:340px;top:328px;width:102px;text-align:center">мужской</div>
<div class="c cb" style="left:442px;top:328px;width:130px;text-align:center">теннис</div>
<div class="c" style="left:30px;top:349px">Кроссовки беговые, размер 42</div>
<div class="c cb" style="left:340px;top:349px;width:102px;text-align:center">мужской</div>
<div class="c cb" style="left:442px;top:349px;width:130px;text-align:center">бег</div>
<div class="c" style="left:30px;top:370px">Кроссовки беговые, размер 44</div>
<div class="c cb" style="left:340px;top:370px;width:102px;text-align:center">мужской</div>
<div class="c cb" style="left:442px;top:370px;width:130px;text-align:center">бег</div>
<div class="c" style="left:30px;top:391px">Кроссовки беговые, размер 45</div>
<div class="c cb" style="left:340px;top:391px;width:102px;text-align:center">мужской</div>
<div class="c cb" style="left:442px;top:391px;width:130px;text-align:center">бег</div>
<div class="c" style="left:30px;top:412px">Кроссовки теннисные, размер 38</div>
<div class="c cb" style="left:340px;top:412px;width:102px;text-align:center">женский</div>
<div class="c cb" style="left:442px;top:412px;width:130px;text-align:center">теннис</div>
<div class="c" style="left:30px;top:433px">Кроссовки беговые, размер 35</div>
<div class="c cb" style="left:340px;top:433px;width:102px;text-align:center">женский</div>
<div class="c cb" style="left:442px;top:433px;width:130px;text-align:center">бег</div>
<div class="c" style="left:30px;top:454px">Кроссовки теннисные, размер 43</div>
<div class="c cb" style="left:340px;top:454px;width:102px;text-align:center">мужской</div>
<div class="c cb" style="left:442px;top:454px;width:130px;text-align:center">теннис</div>
<div class="c" style="left:30px;top:475px">Кроссовки беговые, размер 36</div>
<div class="c cb" style="left:340px;top:475px;width:102px;text-align:center">женский</div>
<div class="c cb" style="left:442px;top:475px;width:130px;text-align:center">бег</div>
<div class="c" style="left:30px;top:496px">Кроссовки беговые, размер 37</div>
<div class="c cb" style="left:340px;top:496px;width:102px;text-align:center">женский</div>
<div class="c cb" style="left:442px;top:496px;width:130px;text-align:center">бег</div>
<div class="c" style="left:30px;top:517px">Кроссовки беговые, размер 38</div>
<div class="c cb" style="left:340px;top:517px;width:102px;text-align:center">женский</div>
<div class="c cb" style="left:442px;top:517px;width:130px;text-align:center">бег</div>
<div class="c" style="left:30px;top:538px">Кроссовки беговые, размер 38</div>
<div class="c cb" style="left:340px;top:538px;width:102px;text-align:center">мужской</div>
<div class="c cb" style="left:442px;top:538px;width:130px;text-align:center">бег</div>
<div class="c" style="left:30px;top:559px">Кроссовки теннисные, размер 39</div>
<div class="c cb" style="left:340px;top:559px;width:102px;text-align:center">женский</div>
<div class="c cb" style="left:442px;top:559px;width:130px;text-align:center">теннис</div>
<div class="c" style="left:30px;top:580px">Кроссовки беговые, размер 35</div>
<div class="c cb" style="left:340px;top:580px;width:102px;text-align:center">женский</div>
<div class="c cb" style="left:442px;top:580px;width:130px;text-align:center">бег</div>
<div class="c" style="left:30px;top:601px">Кроссовки беговые, размер 39</div>
<div class="c cb" style="left:340px;top:601px;width:102px;text-align:center">женский</div>
<div class="c cb" style="left:442px;top:601px;width:130px;text-align:center">бег</div>
<div class="c" style="left:30px;top:622px">Кроссовки теннисные, размер 40</div>
<div class="c cb" style="left:340px;top:622px;width:102px;text-align:center">мужской</div>
<div class="c cb" style="left:442px;top:622px;width:130px;text-align:center">теннис</div>
<div class="c" style="left:30px;top:643px">Кроссовки теннисные, размер 44</div>
<div class="c cb" style="left:340px;top:643px;width:102px;text-align:center">мужской</div>
<div class="c cb" style="left:442px;top:643px;width:130px;text-align:center">теннис</div>
<div class="rn" style="left:5px;top:184px;color:#555">1</div>
<div class="rn" style="left:5px;top:205px;color:#217346">2</div>
<div class="rn" style="left:5px;top:226px;color:#555">3</div>
<div class="rn" style="left:5px;top:247px;color:#555">4</div>
<div class="rn" style="left:5px;top:268px;color:#555">5</div>
<div class="rn" style="left:5px;top:289px;color:#555">6</div>
<div class="rn" style="left:5px;top:310px;color:#555">7</div>
<div class="rn" style="left:5px;top:331px;color:#555">8</div>
<div class="rn" style="left:5px;top:352px;color:#555">9</div>
<div class="rn" style="left:5px;top:373px;color:#555">10</div>
<div class="rn" style="left:5px;top:394px;color:#555">11</div>
<div class="rn" style="left:5px;top:415px;color:#555">12</div>
<div class="rn" style="left:5px;top:436px;color:#555">13</div>
<div class="rn" style="left:5px;top:457px;color:#555">14</div>
<div class="rn" style="left:5px;top:478px;color:#555">15</div>
<div class="rn" style="left:5px;top:499px;color:#555">16</div>
<div class="rn" style="left:5px;top:520px;color:#555">17</div>
<div class="rn" style="left:5px;top:541px;color:#555">18</div>
<div class="rn" style="left:5px;top:562px;color:#555">19</div>
<div class="rn" style="left:5px;top:583px;color:#555">20</div>
<div class="rn" style="left:5px;top:604px;color:#555">21</div>
<div class="rn" style="left:5px;top:625px;color:#555">22</div>
<div class="rn" style="left:5px;top:646px;color:#555">23</div>
<div class="ch" style="left:28px;top:161px;width:313px;color:#555">A</div>
<div class="ch" style="left:341px;top:161px;width:102px;color:#555">B</div>
<div class="ch" style="left:443px;top:161px;width:130px;color:#555">C</div>
<div class="ch" style="left:573px;top:161px;width:207px;color:#217346">D</div>
<div class="ch" style="left:780px;top:161px;width:65px;color:#555">E</div>
<div class="ch" style="left:845px;top:161px;width:65px;color:#555">F</div>
<div class="ch" style="left:910px;top:161px;width:65px;color:#555">G</div>
<div class="ch" style="left:975px;top:161px;width:65px;color:#555">H</div>
<div class="a" style="left:340px;top:155px;width:1px;height:21px;background:#dedede"></div>
<div class="a" style="left:442px;top:155px;width:1px;height:21px;background:#dedede"></div>
<div class="a" style="left:572px;top:155px;width:1px;height:21px;background:#dedede"></div>
<div class="a" style="left:779px;top:155px;width:1px;height:21px;background:#dedede"></div>
<div class="a" style="left:844px;top:155px;width:1px;height:21px;background:#dedede"></div>
<div class="a" style="left:909px;top:155px;width:1px;height:21px;background:#dedede"></div>
<div class="a" style="left:974px;top:155px;width:1px;height:21px;background:#dedede"></div>
<div class="a" style="left:1039px;top:155px;width:1px;height:21px;background:#dedede"></div>
<div class="a" style="left:573px;top:155px;width:206px;height:21px;background:linear-gradient(#ececec,#e6e6e6)"></div>
<div class="ch" style="left:573px;top:161px;width:207px;color:#217346;-webkit-text-stroke:.15px #217346">D</div>
<div class="a" style="left:572px;top:175px;width:208px;height:2px;background:#217346"></div>
<svg style="left:9px;top:158px" width="16" height="16"><path d="M15 1 L15 15 L1 15 Z" fill="#d9d9d9"/></svg>
<div class="a" style="left:5px;top:198px;width:22px;height:20px;background:#ededed"></div>
<div class="rn" style="left:5px;top:205px;color:#217346">2</div>
<div class="a" style="left:26px;top:197px;width:2px;height:22px;background:#217346"></div>
<div class="a" style="left:339px;top:196px;width:105px;height:24px;border:2px solid #2f6bd1;background:transparent"></div>
<div class="a" style="left:341px;top:198px;width:101px;height:20px;background:#dfe5ee;border:1px solid #fff"></div>
<div class="c cb" style="left:340px;top:202px;width:102px;text-align:center">женский</div>
<div class="a" style="left:337px;top:194px;width:7px;height:7px;background:#2f6bd1;border:1px solid #fff"></div>
<div class="a" style="left:337px;top:215px;width:7px;height:7px;background:#2f6bd1;border:1px solid #fff"></div>
<div class="a" style="left:439px;top:194px;width:7px;height:7px;background:#2f6bd1;border:1px solid #fff"></div>
<div class="a" style="left:439px;top:215px;width:7px;height:7px;background:#2f6bd1;border:1px solid #fff"></div>
<div class="a" style="left:574px;top:199px;width:282px;height:18px;background:#fff"></div>
<div class="a" style="left:571px;top:196px;width:210px;height:2px;background:#1f6e43"></div>
<div class="a" style="left:571px;top:196px;width:2px;height:24px;background:#1f6e43"></div>
<div class="a" style="left:571px;top:218px;width:206px;height:2px;background:#1f6e43"></div>
<div class="a" style="left:777px;top:217.5px;width:5px;height:4px;background:#1f6e43"></div>
<div class="c" style="left:575.5px;top:202px;font-size:14px;letter-spacing:.25px;-webkit-text-stroke:.15px #000">=ЕСЛИ(И<span style="color:#d23c3c">(</span><span style="color:#3f74c9">B2</span>="женский";C2="бег"<span style="color:#d23c3c">)</span>;30%;0)</div>
<div class="a" style="left:854px;top:199px;width:1px;height:19px;background:#000"></div>
<div class="a" style="left:185px;top:125px;width:261px;height:30px;border:3px solid #fb0007;border-radius:9px"></div>
<div class="a" style="left:565px;top:190px;width:296px;height:35px;border:3.2px solid #fb0007;border-radius:10px"></div>
<div class="a" style="left:1038px;top:179px;width:10px;height:187px;background:rgba(0,0,0,.35);border-radius:5px"></div>
<div class="a" style="left:1051px;top:0px;width:5px;height:645px;background:linear-gradient(180deg,#f5f5f5 0px,rgba(245,245,245,0) 45px),linear-gradient(90deg,#c6c6c6,#dcdcdc 40%,#e4e4e4)"></div>
<div class="a" style="left:0px;top:0px;width:5px;height:645px;background:linear-gradient(180deg,#f5f5f5 0px,rgba(245,245,245,0) 45px),linear-gradient(90deg,#e2e2e2,#d9d9d9 60%,#c6c6c6)"></div>
</div></body></html>
